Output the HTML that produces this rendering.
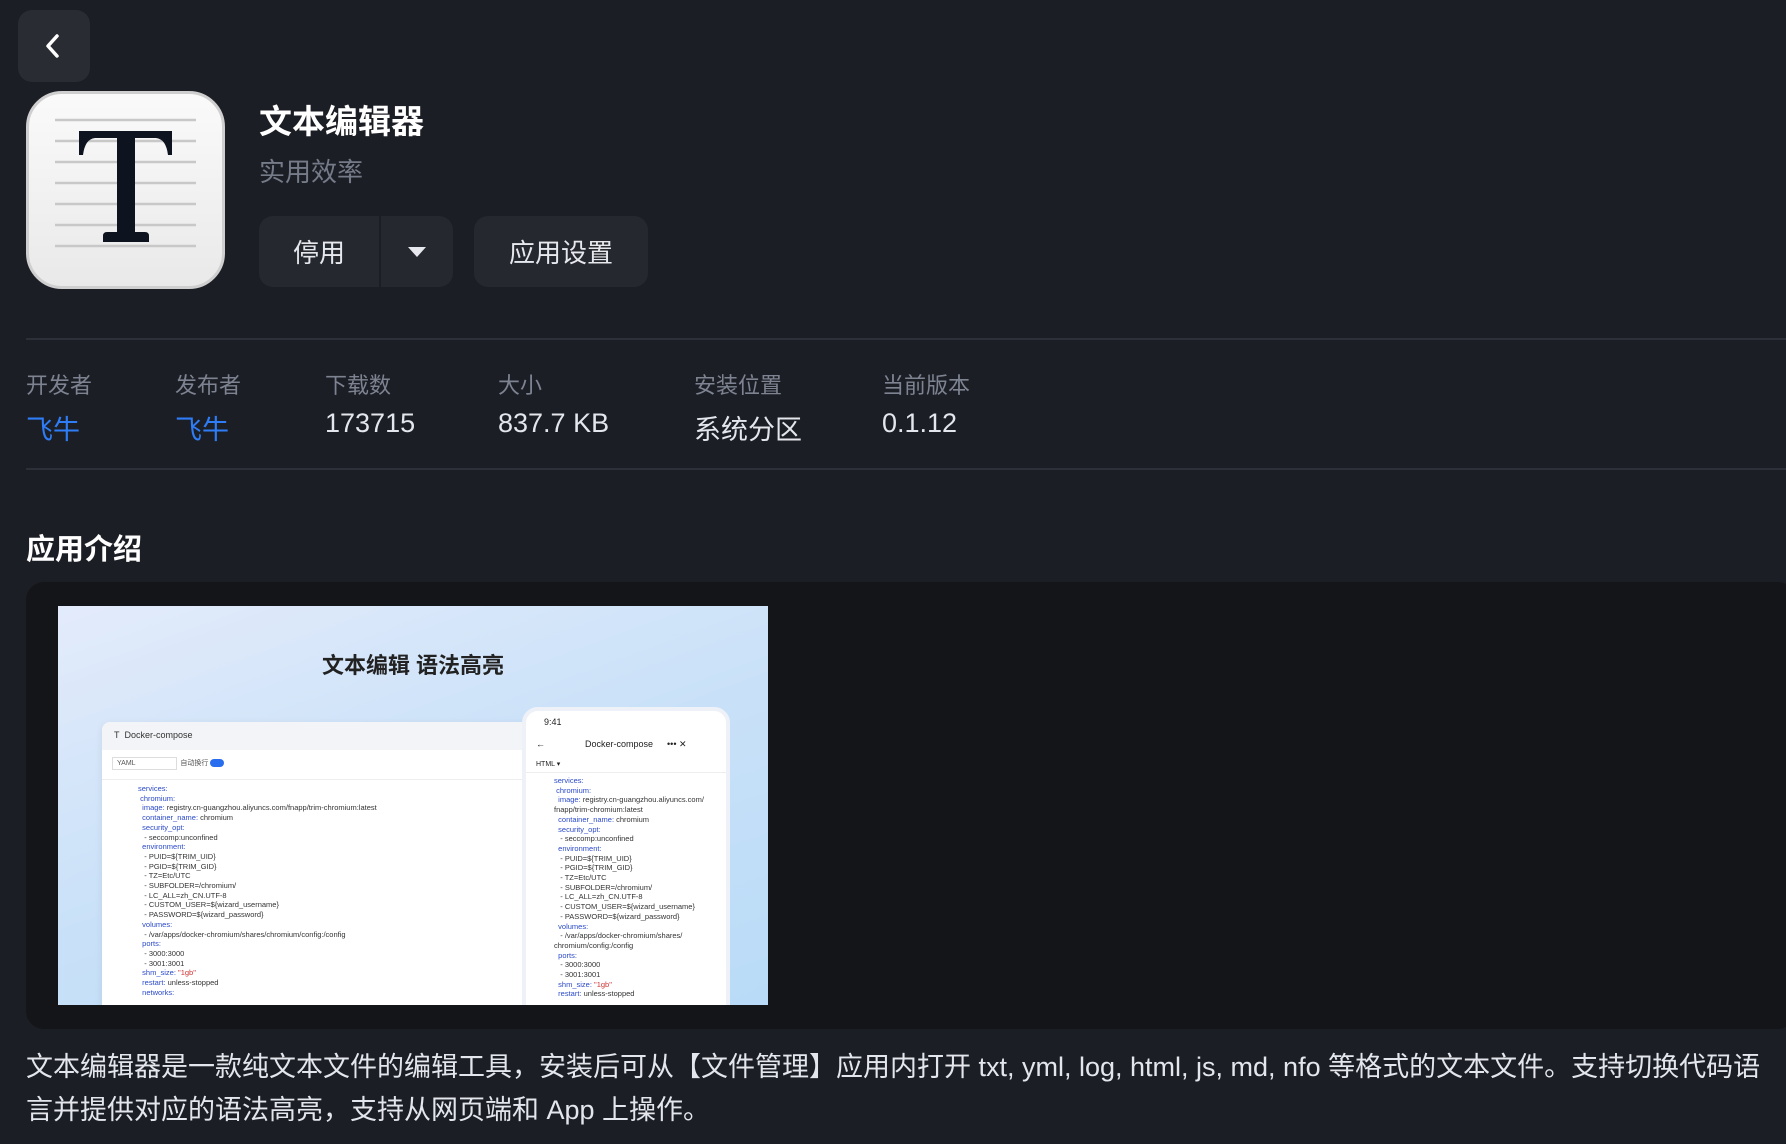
<!DOCTYPE html>
<html><head><meta charset="utf-8"><style>
*{margin:0;padding:0;box-sizing:border-box}
body{width:1786px;height:1144px;overflow:hidden;background:#1c1e25;font-family:"Liberation Sans","Noto Sans CJK SC",sans-serif;color:#e6e8ee;position:relative}
.abs{position:absolute}
.back{left:18px;top:10px;width:72px;height:72px;border-radius:14px;background:#2a2c33}
.icon{left:26px;top:91px;width:199px;height:198px;border-radius:36px;background:linear-gradient(#fafafa,#e9e9e9);border:3px solid #cfcfcf}
.title{left:259px;top:95px;font-size:33px;font-weight:bold;color:#fff}
.sub{left:259px;top:152px;font-size:26px;color:#757b88}
.btn{top:216px;height:71px;border-radius:14px;background:#26282f;font-size:26px;color:#e6e8ee;display:flex;align-items:center;justify-content:center}
.line{left:26px;right:0;height:2px;background:#2e3039}
.lab{top:368px;font-size:22px;color:#7d8391}
.val{top:408px;font-size:27px;color:#e3e6ec}
.blue{color:#2e7df6}
.card{left:26px;top:582px;width:1770px;height:447px;border-radius:18px;background:#141518}
.shot{left:58px;top:606px;width:710px;height:399px;overflow:hidden;background:linear-gradient(160deg,#e3ebfb 0%,#c9e1f8 50%,#b9dbf7 100%)}
.desc{left:26px;top:1046px;font-size:27px;line-height:43px;color:#e3e6ec;white-space:nowrap}
.code{font-size:7.5px;line-height:9.7px;color:#333;white-space:pre;font-family:"Liberation Sans",sans-serif}
.k{color:#2a49c8}
</style></head><body>
<div class="abs back"><svg width="72" height="72"><path d="M39 26 L30 36 L39 46" fill="none" stroke="#fff" stroke-width="3.5" stroke-linecap="round" stroke-linejoin="round"/></svg></div>
<div class="abs icon"></div>
<svg class="abs" style="left:26px;top:91px" width="199" height="198" viewBox="0 0 199 198">
<g stroke="#c8c8c8" stroke-width="2.5"><line x1="29" y1="29" x2="170" y2="29"/><line x1="29" y1="50" x2="170" y2="50"/><line x1="29" y1="71" x2="170" y2="71"/><line x1="29" y1="92" x2="170" y2="92"/><line x1="29" y1="113" x2="170" y2="113"/><line x1="29" y1="134" x2="170" y2="134"/><line x1="29" y1="155" x2="170" y2="155"/></g>
<path d="M53 40 H146 V64 H142 Q140 48 130 47 H109 V141 H119 Q123 141 123 145 V151 H77 V145 Q77 141 81 141 H91 V47 H69 Q59 48 57 64 H53 Z" fill="#0d1420"/></svg>
<div class="abs title">文本编辑器</div>
<div class="abs sub">实用效率</div>
<div class="abs btn" style="left:259px;width:194px;justify-content:flex-start"><span style="width:120px;text-align:center">停用</span><span style="width:2px;height:71px;background:#1c1e25"></span><svg width="72" height="71"><path d="M27 31 H45 L36 41 Z" fill="#e6e8ee"/></svg></div>
<div class="abs btn" style="left:474px;width:174px">应用设置</div>
<div class="abs line" style="top:338px"></div>
<div class="abs lab" style="left:26px">开发者</div><div class="abs val blue" style="left:26px">飞牛</div>
<div class="abs lab" style="left:175px">发布者</div><div class="abs val blue" style="left:175px">飞牛</div>
<div class="abs lab" style="left:325px">下载数</div><div class="abs val" style="left:325px">173715</div>
<div class="abs lab" style="left:498px">大小</div><div class="abs val" style="left:498px">837.7 KB</div>
<div class="abs lab" style="left:694px">安装位置</div><div class="abs val" style="left:694px">系统分区</div>
<div class="abs lab" style="left:882px">当前版本</div><div class="abs val" style="left:882px">0.1.12</div>
<div class="abs line" style="top:468px"></div>
<div class="abs" style="left:26px;top:526px;font-size:29px;font-weight:bold;color:#fff">应用介绍</div>
<div class="abs card"></div>
<div class="abs shot">
 <div class="abs" style="left:0;width:710px;top:42px;text-align:center;font-size:22px;font-weight:bold;color:#222">文本编辑 语法高亮</div>
 <div class="abs" style="left:44px;top:116px;width:440px;height:300px;background:#fff;border-radius:8px;box-shadow:0 2px 8px rgba(0,0,0,.08)">
  <div style="height:28px;background:#f2f4f7;border-radius:8px 8px 0 0;font-size:9px;color:#333;padding:8px 12px">T&nbsp; Docker-compose</div>
  <div style="height:30px;border-bottom:1px solid #eee;font-size:7px;color:#555;padding:8px 10px"><span style="border:1px solid #ddd;padding:2px 40px 2px 4px">YAML</span>&nbsp; 自动换行 <span style="display:inline-block;width:14px;height:8px;border-radius:4px;background:#2a6ef0;vertical-align:middle"></span></div>
  <div class="code" style="padding:4px 0 0 36px"><span class="k">services:</span>
 <span class="k">chromium:</span>
  <span class="k">image:</span> registry.cn-guangzhou.aliyuncs.com/fnapp/trim-chromium:latest
  <span class="k">container_name:</span> chromium
  <span class="k">security_opt:</span>
   - seccomp:unconfined
  <span class="k">environment:</span>
   - PUID=${TRIM_UID}
   - PGID=${TRIM_GID}
   - TZ=Etc/UTC
   - SUBFOLDER=/chromium/
   - LC_ALL=zh_CN.UTF-8
   - CUSTOM_USER=${wizard_username}
   - PASSWORD=${wizard_password}
  <span class="k">volumes:</span>
   - /var/apps/docker-chromium/shares/chromium/config:/config
  <span class="k">ports:</span>
   - 3000:3000
   - 3001:3001
  <span class="k">shm_size:</span> <span style="color:#c33">"1gb"</span>
  <span class="k">restart:</span> unless-stopped
  <span class="k">networks:</span></div>
 </div>
 <div class="abs" style="left:464px;top:101px;width:208px;height:320px;background:#fff;border-radius:16px;border:4px solid #eef2f8">
  <div style="font-size:9px;color:#222;padding:6px 18px">9:41</div>
  <div style="font-size:9px;color:#222;padding:6px 10px">←<span style="margin-left:40px">Docker-compose</span><span style="margin-left:14px">••• ✕</span></div>
  <div style="font-size:7px;color:#222;padding:4px 10px;border-bottom:1px solid #eee">HTML ▾</div>
  <div class="code" style="padding:3px 0 0 28px"><span class="k">services:</span>
 <span class="k">chromium:</span>
  <span class="k">image:</span> registry.cn-guangzhou.aliyuncs.com/
fnapp/trim-chromium:latest
  <span class="k">container_name:</span> chromium
  <span class="k">security_opt:</span>
   - seccomp:unconfined
  <span class="k">environment:</span>
   - PUID=${TRIM_UID}
   - PGID=${TRIM_GID}
   - TZ=Etc/UTC
   - SUBFOLDER=/chromium/
   - LC_ALL=zh_CN.UTF-8
   - CUSTOM_USER=${wizard_username}
   - PASSWORD=${wizard_password}
  <span class="k">volumes:</span>
   - /var/apps/docker-chromium/shares/
chromium/config:/config
  <span class="k">ports:</span>
   - 3000:3000
   - 3001:3001
  <span class="k">shm_size:</span> <span style="color:#c33">"1gb"</span>
  <span class="k">restart:</span> unless-stopped</div>
 </div>
</div>
<div class="abs desc">文本编辑器是一款纯文本文件的编辑工具，安装后可从【文件管理】应用内打开 txt, yml, log, html, js, md, nfo 等格式的文本文件。支持切换代码语<br>言并提供对应的语法高亮，支持从网页端和 App 上操作。</div>
</body></html>
